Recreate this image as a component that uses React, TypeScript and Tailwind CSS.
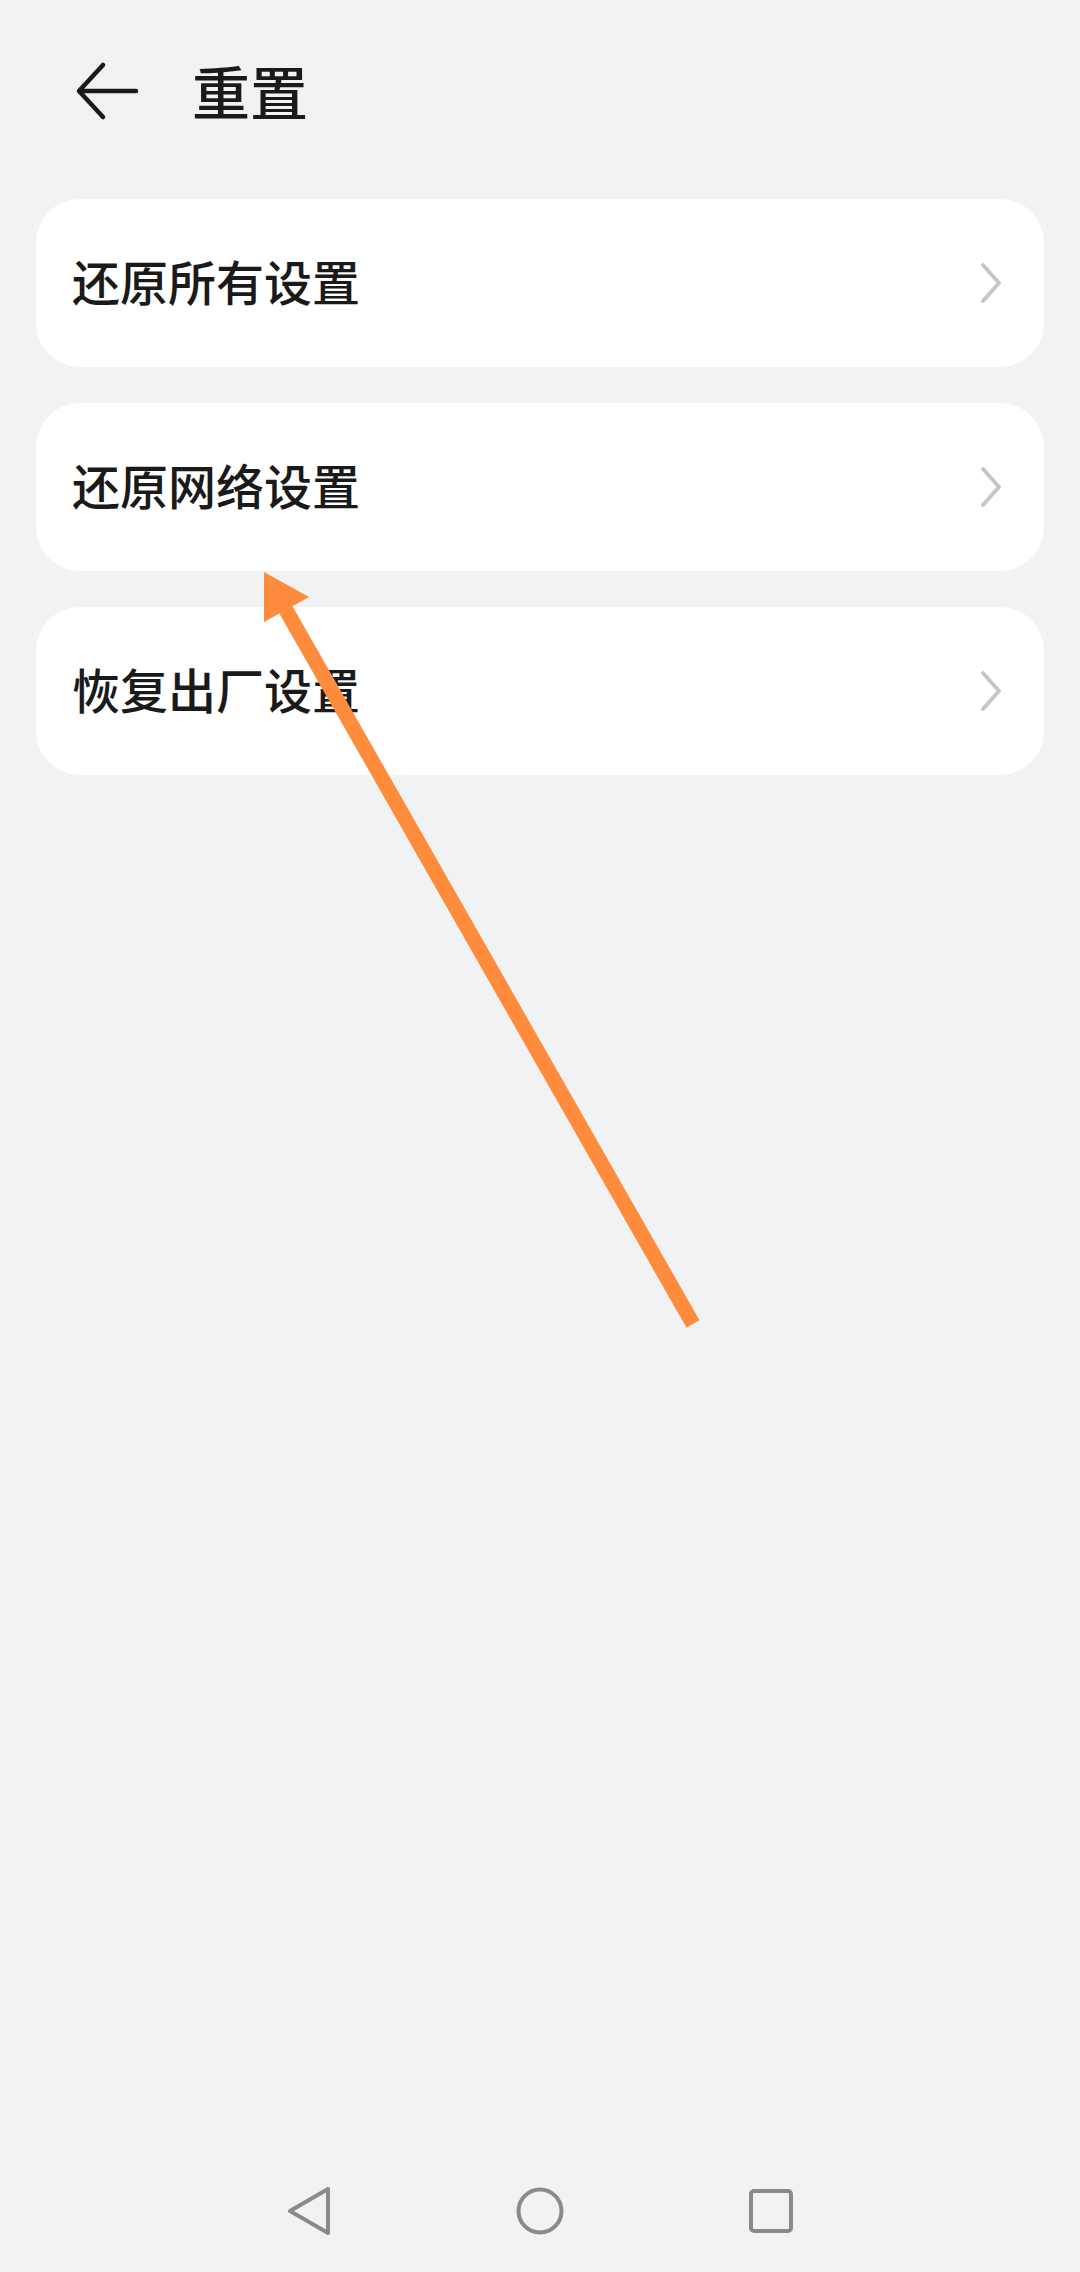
const font = { fontFamily: '"Noto Sans CJK SC", "Noto Sans", sans-serif' };

const items = ["还原所有设置", "还原网络设置", "恢复出厂设置"];

const Chevron = () => (
  <svg width="24" height="42" viewBox="0 0 24 42" fill="none">
    <polyline
      points="4,3 20,21 4,39"
      stroke="#c6c6c6"
      strokeWidth="4"
      strokeLinecap="round"
      strokeLinejoin="round"
    />
  </svg>
);

const NavBar = () => (
  <div className="h-[122px] flex items-center justify-center gap-[183px]">
    <svg width="48" height="52" viewBox="0 0 48 52" fill="none">
      <path
        d="M43 4 L5 26 L43 48 Z"
        stroke="#8a8a8a"
        strokeWidth="4"
        strokeLinejoin="round"
      />
    </svg>
    <svg width="48" height="52" viewBox="0 0 48 52" fill="none">
      <circle cx="24" cy="26" r="21.5" stroke="#8a8a8a" strokeWidth="4" />
    </svg>
    <svg width="48" height="52" viewBox="0 0 48 52" fill="none">
      <rect x="4" y="6" width="40" height="40" rx="3" stroke="#8a8a8a" strokeWidth="4" />
    </svg>
  </div>
);

export default function App() {
  return (
    <div className="relative w-[1080px] h-[2272px] bg-[#f1f2f4] flex flex-col" style={font}>
      <div className="h-[182px] flex items-center">
        <svg className="ml-[74px]" width="68" height="60" viewBox="0 0 68 60" fill="none">
          <path
            d="M29 4 L5 30 L29 56 M5 30 L62 30"
            stroke="#1a1a1a"
            strokeWidth="4.5"
            strokeLinecap="round"
            strokeLinejoin="round"
          />
        </svg>
        <h1 className="ml-[50px] pb-[2px] text-[58px] font-medium text-[#1a1a1a] leading-none">重置</h1>
      </div>

      <div className="px-[36px] pt-[17px] flex flex-col gap-[36px]">
        {items.map((label) => (
          <div
            key={label}
            className="h-[168px] rounded-[44px] bg-white flex items-center justify-between pl-[36px] pr-[41px]"
          >
            <span className="pb-[6px] text-[48px] font-medium text-[#1a1a1a] leading-none">{label}</span>
            <Chevron />
          </div>
        ))}
      </div>

      <div className="flex-1" />
      <NavBar />

      {/* annotation arrow drawn over the screenshot */}
      <svg className="absolute inset-0 pointer-events-none" width="1080" height="2272" viewBox="0 0 1080 2272">
        <line x1="693" y1="1324" x2="282" y2="603" stroke="#ff8c3c" strokeWidth="15" />
        <polygon points="264,572 309,597 264,622" fill="#ff8c3c" />
      </svg>
    </div>
  );
}
